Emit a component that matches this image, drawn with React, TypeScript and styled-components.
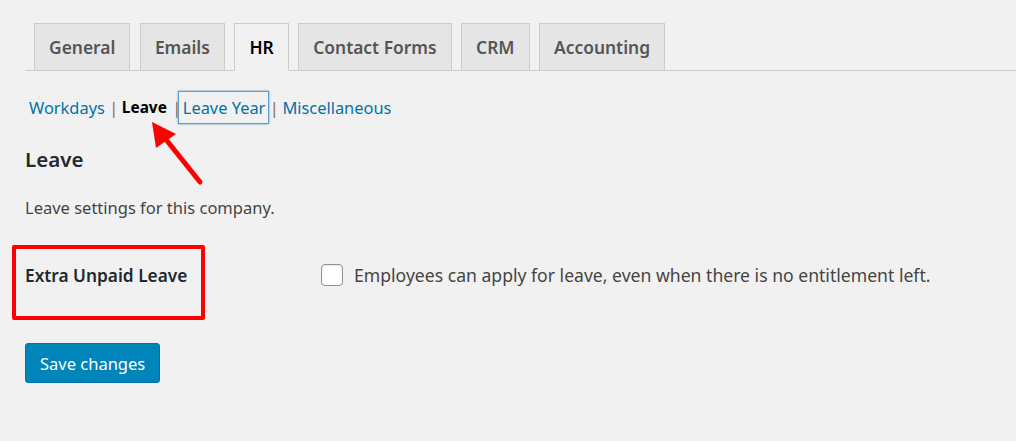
import * as React from 'react';
import styled, { createGlobalStyle } from 'styled-components';

const GlobalStyle = createGlobalStyle`
    html, body {
        margin: 0;
        padding: 0;
        background: #f1f1f1;
    }
    body {
        font-family: 'Noto Sans', 'Open Sans', sans-serif;
        color: #444;
    }
`;

const Wrap = styled.div`
    position: relative;
    padding: 0 0 40px 25px;
    min-height: 441px;
    box-sizing: border-box;
`;

const TabBar = styled.nav`
    display: flex;
    align-items: flex-end;
    padding: 23px 0 0 9px;
    border-bottom: 1px solid #ccc;
    height: 47px;
    box-sizing: content-box;
`;

const Tab = styled.a<{ $active?: boolean }>`
    display: flex;
    align-items: center;
    height: 46px;
    padding: 0 14px;
    margin-right: 9.5px;
    margin-bottom: -1px;
    border: 1px solid #ccc;
    border-bottom-color: ${p => (p.$active ? '#f1f1f1' : '#ccc')};
    background: ${p => (p.$active ? '#f1f1f1' : '#e5e5e5')};
    color: ${p => (p.$active ? '#000' : '#555')};
    font-size: 17.4px;
    font-weight: 600;
    text-decoration: none;
    white-space: nowrap;
`;

const SubNav = styled.ul`
    display: flex;
    align-items: center;
    list-style: none;
    margin: 19px 0 0 3px;
    padding: 0;
    height: 34px;
    font-size: 16.4px;
`;

const SubItem = styled.li`
    display: flex;
    align-items: center;
`;

const SubLink = styled.a<{ $current?: boolean; $focus?: boolean }>`
    color: ${p => (p.$current ? '#000' : '#0073aa')};
    font-weight: ${p => (p.$current ? 700 : 400)};
    font-size: ${p => (p.$current ? '15.4px' : 'inherit')};
    text-decoration: none;
    padding: ${p => (p.$focus ? '4px 3px 4px 4px' : '0')};
    border: 1px solid ${p => (p.$focus ? '#5b9dd9' : 'transparent')};
    box-shadow: ${p => (p.$focus ? '0 0 2px rgba(30,140,190,.8)' : 'none')};
`;

const Sep = styled.span<{ $before: number; $after: number }>`
    display: flex;
    justify-content: center;
    width: 2px;
    color: #8a6d4b;
    margin: 0 ${p => p.$after}px 0 ${p => p.$before}px;
`;

const Heading = styled.h2`
    margin: 21px 0 0;
    font-size: 20.5px;
    font-weight: 600;
    color: #23282d;
    line-height: 28px;
`;

const Desc = styled.p`
    margin: 24px 0 0;
    font-size: 16.5px;
    color: #444;
    line-height: 22px;
`;

const FormRow = styled.div`
    display: flex;
    align-items: center;
    margin-top: 31px;
    height: 50px;
`;

const LabelCell = styled.div`
    position: relative;
    width: 296px;
    font-size: 17.3px;
    font-weight: 600;
    color: #23282d;
`;

const Highlight = styled.div`
    position: absolute;
    left: -13px;
    top: -19px;
    width: 185px;
    height: 67px;
    border: 4px solid #f00;
    border-radius: 2px;
`;

const CheckLabel = styled.label`
    display: flex;
    align-items: center;
    gap: 11px;
    font-size: 17.6px;
    color: #444;
`;

const Box = styled.span`
    flex: none;
    width: 20px;
    height: 20px;
    border: 1px solid #8c8f94;
    border-radius: 4px;
    background: #fff;
    box-shadow: inset 0 1px 2px rgba(0, 0, 0, 0.1);
`;

const SaveButton = styled.button`
    display: block;
    margin-top: 43px;
    height: 40px;
    padding: 0 14px;
    background: #0085ba;
    border: 1px solid #0073aa;
    border-radius: 3px;
    color: #fff;
    font-family: inherit;
    font-size: 16.5px;
`;

const Arrow = styled.svg`
    position: absolute;
    left: 140px;
    top: 110px;
`;

const tabs = ['General', 'Emails', 'HR', 'Contact Forms', 'CRM', 'Accounting'];

export default function App() {
    return (
        <>
            <GlobalStyle />
            <Wrap>
                <TabBar>
                    {tabs.map(t => (
                        <Tab key={t} $active={t === 'HR'}>
                            {t}
                        </Tab>
                    ))}
                </TabBar>

                <SubNav>
                    <SubItem>
                        <SubLink>Workdays</SubLink>
                        <Sep $before={7} $after={6}>|</Sep>
                    </SubItem>
                    <SubItem>
                        <SubLink $current>Leave</SubLink>
                        <Sep $before={8} $after={0}>|</Sep>
                    </SubItem>
                    <SubItem>
                        <SubLink $focus>Leave Year</SubLink>
                        <Sep $before={4} $after={6}>|</Sep>
                    </SubItem>
                    <SubItem>
                        <SubLink>Miscellaneous</SubLink>
                    </SubItem>
                </SubNav>

                <Heading>Leave</Heading>
                <Desc>Leave settings for this company.</Desc>

                <FormRow>
                    <LabelCell>
                        <Highlight />
                        Extra Unpaid Leave
                    </LabelCell>
                    <CheckLabel>
                        <Box />
                        Employees can apply for leave, even when there is no entitlement left.
                    </CheckLabel>
                </FormRow>

                <SaveButton>Save changes</SaveButton>

                <Arrow width="80" height="80" viewBox="0 0 80 80">
                    <line x1="60" y1="72" x2="20" y2="22" stroke="#f00" strokeWidth="5" strokeLinecap="round" />
                    <polygon points="12,12 16,38 36,24" fill="#f00" />
                </Arrow>
            </Wrap>
        </>
    );
}
